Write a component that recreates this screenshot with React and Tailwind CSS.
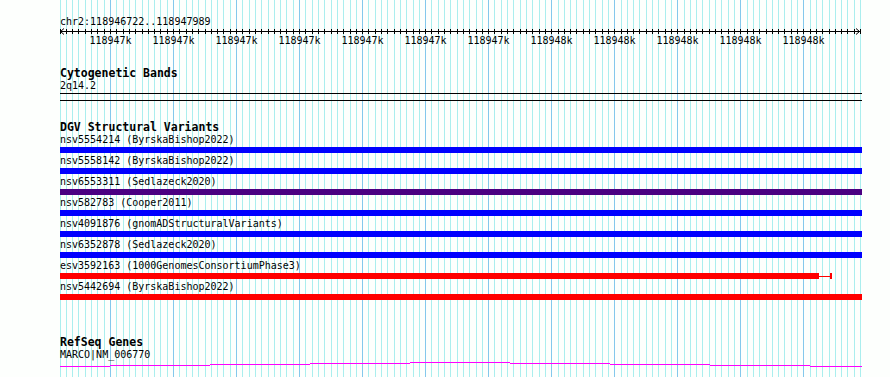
const MAJOR0 = 110;
const STEP = 6.303;
const LEFT = 60;

const gridLines = [];
for (let k = -8; k <= 119; k++) {
  gridLines.push({ x: Math.round(MAJOR0 + k * STEP), major: k >= 0 && k % 10 === 0 });
}

const majorLabels = [
  '118947k', '118947k', '118947k', '118947k', '118947k', '118947k', '118947k',
  '118948k', '118948k', '118948k', '118948k', '118948k',
];

const variants = [
  { name: 'nsv5554214 (ByrskaBishop2022)', color: 'bg-[#0000ff]' },
  { name: 'nsv5558142 (ByrskaBishop2022)', color: 'bg-[#0000ff]' },
  { name: 'nsv6553311 (Sedlazeck2020)', color: 'bg-[#4b0082]' },
  { name: 'nsv582783 (Cooper2011)', color: 'bg-[#0000ff]' },
  { name: 'nsv4091876 (gnomADStructuralVariants)', color: 'bg-[#0000ff]' },
  { name: 'nsv6352878 (Sedlazeck2020)', color: 'bg-[#0000ff]' },
  { name: 'esv3592163 (1000GenomesConsortiumPhase3)', color: 'bg-[#ff0000]', partial: true },
  { name: 'nsv5442694 (ByrskaBishop2022)', color: 'bg-[#ff0000]' },
];

// exon-ish steps of the gene line: [x1, x2, y]
const geneSteps = [
  [60, 110, 5], [110, 210, 4], [210, 310, 3], [310, 410, 2], [410, 510, 1],
  [510, 610, 2], [610, 710, 3], [710, 810, 4], [810, 862, 5],
];

function Grid() {
  return (
    <svg className="absolute inset-0" width="890" height="377">
      {gridLines.map((g, i) => (
        <rect key={i} x={g.x} y="0" width="1" height="377" fill={g.major ? '#84c8ec' : '#aaeeee'} />
      ))}
    </svg>
  );
}

function Ruler() {
  return (
    <svg width="802" height="18" className="block">
      <rect x="0" y="3" width="800" height="1" fill="#000" />
      {gridLines.map((g, i) => (
        <rect key={i} x={g.x - LEFT} y="1" width="1" height="5" fill="#000" />
      ))}
      <path d="M0.5 3.5 L4 0.5 M0.5 3.5 L4 6.5" stroke="#000" fill="none" />
      <path d="M799.5 3.5 L796 0.5 M799.5 3.5 L796 6.5" stroke="#000" fill="none" />
      {majorLabels.map((l, i) => (
        <text
          key={i}
          x={gridLines[8 + i * 10].x - LEFT + 0.5}
          y="16"
          textAnchor="middle"
          fontFamily="'DejaVu Sans Mono', monospace"
          fontSize="10"
          fill="#000"
        >
          {l}
        </text>
      ))}
    </svg>
  );
}

function Track({ title, children, className }) {
  return (
    <div className={className}>
      <div className="h-[13px] text-[11.5px] leading-[13px] font-bold">{title}</div>
      {children}
    </div>
  );
}

export default function App() {
  return (
    <div className="relative w-[890px] h-[377px] overflow-hidden bg-[#fdfffd] font-['DejaVu_Sans_Mono',monospace] text-black">
      <Grid />
      <div className="relative flex flex-col pl-[60px] w-[862px]">
        <div className="mt-[16px] h-[12px] text-[10px] leading-[12px]">chr2:118946722..118947989</div>
        <Ruler />

        <Track title="Cytogenetic Bands" className="mt-[21px]">
          <div className="h-[12px] text-[10px] leading-[12px]">2q14.2</div>
          <div className="mt-[1px] h-[8px] border-y border-black" />
        </Track>

        <Track title="DGV Structural Variants" className="mt-[20px]">
          {variants.map(v => (
            <div key={v.name} className="flex flex-col">
              <div className="h-[12px] text-[10px] leading-[12px] whitespace-nowrap">{v.name}</div>
              {v.partial ? (
                <div className="mt-[1px] mb-[2px] flex items-center h-[6px]">
                  <div className={`w-[759px] h-[6px] ${v.color}`} />
                  <div className="w-[11px] h-[1px] bg-[#ff0000]" />
                  <div className="w-[2px] h-[6px] bg-[#ff0000]" />
                </div>
              ) : (
                <div className={`mt-[1px] mb-[2px] h-[6px] w-[802px] ${v.color}`} />
              )}
            </div>
          ))}
        </Track>

        <Track title="RefSeq Genes" className="mt-[34px]">
          <div className="h-[12px] text-[10px] leading-[12px]">MARCO|NM_006770</div>
          <svg width="802" height="8" className="block">
            {geneSteps.map(([a, b, y], i) => (
              <rect key={i} x={a - LEFT} y={y} width={b - a} height="1" fill="#ff00ff" />
            ))}
          </svg>
        </Track>
      </div>
    </div>
  );
}
